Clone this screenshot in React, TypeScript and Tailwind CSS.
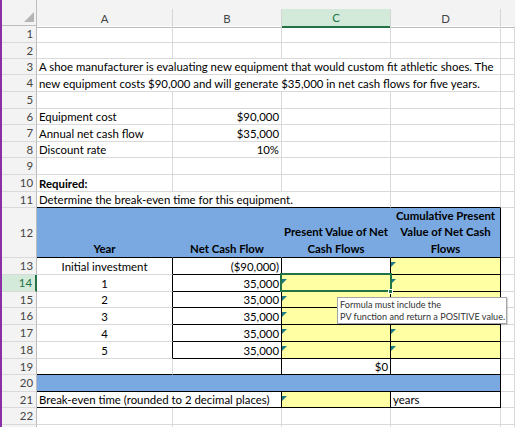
import React from "react";

const GR = "border-r border-r-[#d9d9d9]";
const KR = "border-r border-r-black";
const BR = "border-r border-r-[#79a9e0]";
const GB = "border-b border-b-[#d9d9d9]";
const KB = "border-b border-b-black";
const BLUE = "bg-[#79a9e0]";
const YEL = "bg-[#ffffa3]";

function Tri() {
  return (
    <svg className="absolute left-0 top-[4px]" width="5" height="5" viewBox="0 0 5 5">
      <polygon points="0,0 5,0 0,5" fill="#1e7b84" />
    </svg>
  );
}

type CellProps = {
  w: string;
  r?: string;
  b?: string;
  bg?: string;
  al?: string;
  bold?: boolean;
  tri?: boolean;
  children?: React.ReactNode;
};

function Cell({ w, r = GR, b = GB, bg = "", al = "justify-start", bold = false, tri = false, children }: CellProps) {
  return (
    <div
      className={`relative flex shrink-0 items-end whitespace-nowrap px-[2px] leading-[14px] ${w} ${r} ${b} ${bg} ${al} ${bold ? "font-bold" : ""}`}
    >
      {tri && <Tri />}
      {children}
    </div>
  );
}

function Row({ h, n, sel = false, children }: { h: string; n?: number; sel?: boolean; children?: React.ReactNode }) {
  return (
    <div className={`flex shrink-0 ${h}`}>
      <div
        className={`flex w-[35px] shrink-0 items-center justify-end pr-[3px] leading-[14px] border-b border-b-[#d9d9d9] ${
          sel ? "bg-[#d3e9da] text-[#217346] border-r-2 border-r-[#217346]" : "bg-[#f3f3f3] text-[#444444] border-r border-r-[#bcbcbc]"
        }`}
      >
        {n}
      </div>
      {children}
      <Cell w="flex-1" />
    </div>
  );
}

function Blank() {
  return (
    <>
      <Cell w="w-[136px]" />
      <Cell w="w-[109px]" />
      <Cell w="w-[109px]" />
      <Cell w="w-[110px]" />
    </>
  );
}

export default function App() {
  return (
    <div className="relative flex h-[427px] w-[515px] overflow-hidden bg-white font-[Lato,sans-serif] text-[11.4px] text-black">
      <div className="w-[2px] shrink-0 bg-[#8a2fa6]" />
      <div className="flex min-w-0 flex-1 flex-col">
        {/* column headers */}
        <div className="flex h-[26px] shrink-0">
          <div className="relative w-[35px] shrink-0 border-r border-b border-r-[#bcbcbc] border-b-[#bcbcbc] bg-[#f3f3f3]">
            <svg className="absolute right-[2px] bottom-[3px]" width="10" height="10" viewBox="0 0 10 10">
              <polygon points="10,0 10,10 0,10" fill="#b5b5b5" />
            </svg>
          </div>
          <div className="flex min-w-0 flex-1 flex-col bg-[#f3f3f3]">
            <div className="h-[9px] shrink-0" />
            <div className="flex flex-1 text-[#444444]">
              <div className="flex w-[136px] shrink-0 items-center justify-center border-r border-b border-r-[#d5d5d5] border-b-[#bcbcbc]">A</div>
              <div className="flex w-[109px] shrink-0 items-center justify-center border-r border-b border-r-[#d5d5d5] border-b-[#bcbcbc]">B</div>
              <div className="flex w-[109px] shrink-0 items-center justify-center border-r border-b-2 border-r-[#d5d5d5] border-b-[#217346] bg-[#d3e9da] text-[#217346]">C</div>
              <div className="flex w-[110px] shrink-0 items-center justify-center border-r border-b border-r-[#d5d5d5] border-b-[#bcbcbc]">D</div>
              <div className="flex-1 border-b border-b-[#bcbcbc]" />
            </div>
          </div>
        </div>

        <Row h="h-[17px]" n={1}><Blank /></Row>
        <Row h="h-[16px]" n={2}><Blank /></Row>
        <Row h="h-[16px]" n={3}>
          <Cell w="w-[464px]">A shoe manufacturer is evaluating new equipment that would custom fit athletic shoes. The</Cell>
        </Row>
        <Row h="h-[17px]" n={4}>
          <Cell w="w-[464px]">new equipment costs $90,000 and will generate $35,000 in net cash flows for five years.</Cell>
        </Row>
        <Row h="h-[17px]" n={5}><Blank /></Row>
        <Row h="h-[16px]" n={6}>
          <Cell w="w-[136px]">Equipment cost</Cell>
          <Cell w="w-[109px]" al="justify-end">$90,000</Cell>
          <Cell w="w-[109px]" />
          <Cell w="w-[110px]" />
        </Row>
        <Row h="h-[17px]" n={7}>
          <Cell w="w-[136px]">Annual net cash flow</Cell>
          <Cell w="w-[109px]" al="justify-end">$35,000</Cell>
          <Cell w="w-[109px]" />
          <Cell w="w-[110px]" />
        </Row>
        <Row h="h-[16px]" n={8}>
          <Cell w="w-[136px]">Discount rate</Cell>
          <Cell w="w-[109px]" al="justify-end">10%</Cell>
          <Cell w="w-[109px]" />
          <Cell w="w-[110px]" />
        </Row>
        <Row h="h-[17px]" n={9}><Blank /></Row>
        <Row h="h-[17px]" n={10}>
          <Cell w="w-[136px]" bold>Required:</Cell>
          <Cell w="w-[109px]" />
          <Cell w="w-[109px]" />
          <Cell w="w-[110px]" />
        </Row>
        <Row h="h-[16px]" n={11}>
          <Cell w="w-[354px]" b={KB}>Determine the break-even time for this equipment.</Cell>
          <Cell w="w-[110px]" b={KB} />
        </Row>

        {/* header row 12 */}
        <div className="flex h-[50px] shrink-0">
          <div className="flex w-[35px] shrink-0 items-center justify-end pr-[3px] leading-[14px] border-b border-r border-b-[#d9d9d9] border-r-[#bcbcbc] bg-[#f3f3f3] text-[#444444]">
            12
          </div>
          <div className={`flex w-[136px] shrink-0 flex-col items-center justify-end whitespace-nowrap text-center font-bold leading-[16.5px] ${BLUE} ${BR} ${KB}`}>
            Year
          </div>
          <div className={`flex w-[109px] shrink-0 flex-col items-center justify-end whitespace-nowrap text-center font-bold leading-[16.5px] ${BLUE} ${BR} ${KB}`}>
            Net Cash Flow
          </div>
          <div className={`flex w-[109px] shrink-0 flex-col items-center justify-end whitespace-nowrap text-center font-bold leading-[16.5px] ${BLUE} ${BR} ${KB}`}>
            <span>Present Value of Net</span>
            <span>Cash Flows</span>
          </div>
          <div className={`flex w-[110px] shrink-0 flex-col items-center justify-end whitespace-nowrap text-center font-bold leading-[16.5px] ${BLUE} ${KR} ${KB}`}>
            <span>Cumulative Present</span>
            <span>Value of Net Cash</span>
            <span>Flows</span>
          </div>
          <Cell w="flex-1" />
        </div>

        <Row h="h-[17px]" n={13}>
          <Cell w="w-[136px]" r={KR} al="justify-center">Initial investment</Cell>
          <Cell w="w-[109px]" r={KR} b={KB} al="justify-end">($90,000)</Cell>
          <Cell w="w-[109px]" r={KR} b={KB} />
          <Cell w="w-[110px]" r={KR} b={KB} bg={YEL} tri />
        </Row>
        <Row h="h-[17px]" n={14} sel>
          <Cell w="w-[136px]" r={KR} al="justify-center">1</Cell>
          <Cell w="w-[109px]" r={KR} b={KB} al="justify-end">35,000</Cell>
          <div className={`relative w-[109px] shrink-0 ${KR} ${KB} ${YEL}`}>
            <Tri />
            <div className="absolute -left-[2px] -top-[2px] z-10 h-[19px] w-[112px] border-2 border-[#217346]" />
            <div className="absolute -right-[3px] -bottom-[3px] z-20 h-[5px] w-[5px] border border-white bg-[#217346]" />
          </div>
          <Cell w="w-[110px]" r={KR} b={KB} bg={YEL} tri />
        </Row>
        <Row h="h-[16px]" n={15}>
          <Cell w="w-[136px]" r={KR} al="justify-center">2</Cell>
          <Cell w="w-[109px]" r={KR} b={KB} al="justify-end">35,000</Cell>
          <Cell w="w-[109px]" r={KR} b={KB} bg={YEL} tri />
          <Cell w="w-[110px]" r={KR} b={KB} bg={YEL} />
        </Row>
        <Row h="h-[17px]" n={16}>
          <Cell w="w-[136px]" r={KR} al="justify-center">3</Cell>
          <Cell w="w-[109px]" r={KR} b={KB} al="justify-end">35,000</Cell>
          <Cell w="w-[109px]" r={KR} b={KB} bg={YEL} tri />
          <Cell w="w-[110px]" r={KR} b={KB} bg={YEL} />
        </Row>
        <Row h="h-[17px]" n={17}>
          <Cell w="w-[136px]" r={KR} al="justify-center">4</Cell>
          <Cell w="w-[109px]" r={KR} b={KB} al="justify-end">35,000</Cell>
          <Cell w="w-[109px]" r={KR} b={KB} bg={YEL} tri />
          <Cell w="w-[110px]" r={KR} b={KB} bg={YEL} tri />
        </Row>
        <Row h="h-[17px]" n={18}>
          <Cell w="w-[136px]" r={KR} al="justify-center">5</Cell>
          <Cell w="w-[109px]" r={KR} b={KB} al="justify-end">35,000</Cell>
          <Cell w="w-[109px]" r={KR} b={KB} bg={YEL} tri />
          <Cell w="w-[110px]" r={KR} b={KB} bg={YEL} tri />
        </Row>
        <Row h="h-[16px]" n={19}>
          <Cell w="w-[136px]" b={KB} />
          <Cell w="w-[109px]" r={KR} b={KB} />
          <Cell w="w-[109px]" r={KR} b={KB} al="justify-end">$0</Cell>
          <Cell w="w-[110px]" r={KR} b={KB} />
        </Row>
        <Row h="h-[17px]" n={20}>
          <Cell w="w-[464px]" r={KR} b={KB} bg={BLUE} />
        </Row>
        <Row h="h-[16px]" n={21}>
          <Cell w="w-[245px]" r={KR} b={KB}>Break-even time (rounded to 2 decimal places)</Cell>
          <Cell w="w-[109px]" r={KR} b={KB} bg={YEL} tri />
          <Cell w="w-[110px]" r={KR} b={KB}>years</Cell>
        </Row>
        <Row h="h-[17px]" n={22}><Blank /></Row>
        <Row h="h-[17px]"><Blank /></Row>
      </div>

      {/* tooltip */}
      <div className="absolute left-[337px] top-[297px] z-30 h-[27px] w-[170px] border border-[#a5a5a5] bg-white pl-[2px] pt-[1px] text-[9.1px] leading-[11.7px] text-[#333333] shadow-[1px_1px_1px_rgba(0,0,0,0.15)]">
        <div className="whitespace-nowrap">Formula must include the</div>
        <div className="whitespace-nowrap">PV function and return a POSITIVE value.</div>
      </div>
    </div>
  );
}
